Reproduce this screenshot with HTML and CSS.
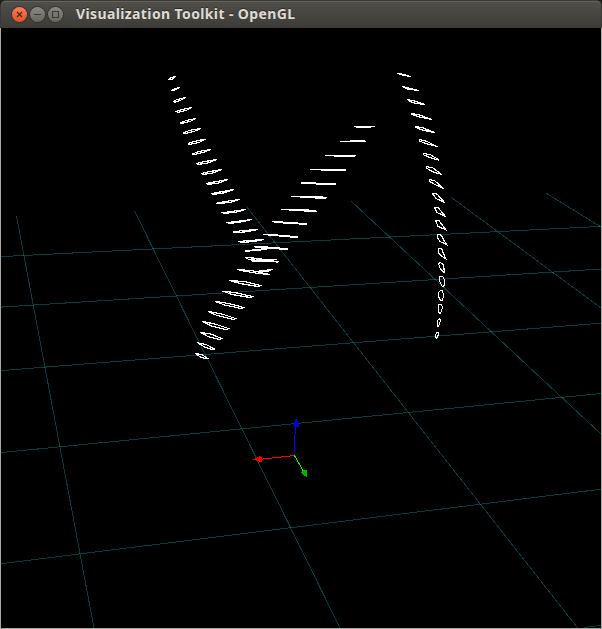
FILE: index.html
```html
<!DOCTYPE html>
<html lang="en">
<head>
<meta charset="utf-8">
<title>Visualization Toolkit - OpenGL</title>
<link rel="stylesheet" href="styles.css">
</head>
<body>
<main class="window">
  <header class="titlebar">
    <div class="controls">
      <button class="control close" aria-label="Close"><svg viewBox="0 0 15 15"><path d="M5 5l5 5M10 5l-5 5"/></svg></button>
      <button class="control" aria-label="Minimize"><svg viewBox="0 0 15 15"><path d="M4 7.5h7"/></svg></button>
      <button class="control" aria-label="Maximize"><svg viewBox="0 0 15 15"><path d="M4.5 4.5h6v6h-6z"/></svg></button>
    </div>
    <h1 class="title">Visualization Toolkit - OpenGL</h1>
  </header>
  <svg class="viewport" viewBox="1 28 600 600" shape-rendering="crispEdges">
    <g class="grid">
      <path d="M1 256.6L601 226.4"/>
      <path d="M1 307.1L601 269"/>
      <path d="M1 370.6L601 323.2"/>
      <path d="M1 452.6L601 393.5"/>
      <path d="M1 563.7L601 489.2"/>
      <path d="M584 627.6L601 625.3"/>
      <path d="M16.5 216L94 628"/>
      <path d="M134.5 211L340 628"/>
      <path d="M246.5 206.5L577.7 628"/>
      <path d="M351.3 201.3L601 434"/>
      <path d="M451.3 197.3L601 308"/>
      <path d="M546.3 193.3L601 227"/>
    </g>
    <g class="contours">
      <!-- left strand -->
      <g class="dense">
      <path d="M168.5 79.5L171 77.5L175.5 76.5L172 79.5Z"/>
      <path d="M171.5 90.5L174 89L179.5 87.5L175 90Z"/>
      <path d="M173.5 101.5L177 99.5L185.5 97.5L180 100.5L174.5 102.5Z"/>
      <path d="M176.5 111.5L182 109.5L191.5 107.5L186 110.5L178 112.5Z"/>
      <path d="M180.5 123L186 120.5L195.5 118.5L190 121.5L182 123.5Z"/>
      <path d="M183.5 133L189 130.5L200.5 128.5L194 131.5L185 133.5Z"/>
      <path d="M188.5 143.5L194 141.5L205.5 139L199 142.5L189 144.5Z"/>
      <path d="M192.5 154L199 151.5L210.5 149.5L203 152.5L194 154.5Z"/>
      <path d="M196.5 163.5L204 161.7L216.5 159.5L208 163L197.5 164.5Z"/>
      <path d="M201.5 173.5L209 171.7L221.5 169.5L213 173L202.5 174.5Z"/>
      <path d="M206.5 183.5L214 182L227.5 179.5L219 183L207.5 184.5Z"/>
      <path d="M211.5 193.5L220 192L233.5 189.5L225 192.7L212.5 194.5Z"/>
      <path d="M216.5 203.2L225 201.5L239.5 199.5L230 202.5L217.5 203.5Z"/>
      <path d="M222.5 212.7L231 211.5L245.5 209.5L236 212.2L224 213.5Z"/>
      <path d="M227.5 222.5L236 221.5L251.5 219.5L241 222L229 223.5Z"/>
      <path d="M233.5 232L243 230.5L257.5 229.5L248 231.7L236 232.5Z"/>
      <path d="M239.5 241.5L249 240.5L263.5 239.5L254 241.5L241 242.5Z"/>
      <path d="M245.5 251L256 249.5L270 248.5L260 250L247 251.2Z"/>
      <path d="M251.5 260.5L262 259.5L277 259.5L266 260.7L252.5 261.5Z"/>
      <path d="M257 271.5L263 270.5L272.5 269.5L267 271.5Z"/>
      </g>
      <!-- middle strand -->
      <path d="M354 126.5H375M356 127.5H371"/>
      <path d="M350 140.5H365M340 141.5H366"/>
      <path d="M325 155.5H356M334 156.5H355"/>
      <path d="M310 169.5H346M321 170.5H346"/>
      <path d="M301 182.5H316M301 183.5H336M316 184.5H336"/>
      <path d="M291 196.5H323M300 197.5H327M315 198.5H326"/>
      <path d="M281 209.5H309M289 210.5H316M304 211.5H317"/>
      <path d="M272 221.5H283M274 222.5H298M283 223.5H307M299 224.5H307"/>
      <path d="M263 234.5H278M268 235.5H290M279 236.5H298M290 237.5H298"/>
      <path d="M254 246.5H268M255 247.5H280M268 248.5H288M279 249.5H288"/>
      <g class="dense">
      <path d="M245.5 257.5L259 258.5L278.5 262L268 261.5L249 259.5Z"/>
      <path d="M237.5 269.5L252 270.7L269.5 274.5L258 273.5L241 270.5Z"/>
      <path d="M229.5 280.5L244 281.5L260.5 285.5L258 286.5L240 283.5Z"/>
      <path d="M222.5 291L237 293L252.5 296.5L250 297.5L232 294.5Z"/>
      <path d="M215.5 301.5L229 303.5L243.5 307.5L241 308.5L224 304.8Z"/>
      <path d="M208.5 311.5L222 314L235.5 318.5L233 319.5L217 315.5Z"/>
      <path d="M202.5 321.5L215 324L228.5 328.5L226 329.5L211 325.8Z"/>
      <path d="M200.5 332.5L211 334L221.5 338.5L219 339.5L208 336.5Z"/>
      <path d="M197.5 342.7L206 344.5L214.5 349L212 349.5L204 346.7Z"/>
      <path d="M195.5 353.5L202 354.5L207.5 358.5L206 359L200 356.7Z"/>
      <!-- right strand -->
      <path d="M397.5 73.5L403 74.2L410.5 76.5L402 75Z"/>
      <path d="M402.5 86.7L409 88L418.5 90.5L408 89.2Z"/>
      <path d="M407.5 99.7L415 101L424.5 104.5L413 102.8Z"/>
      <path d="M411.5 113.5L420 115L431.5 119.5L419 116.8L412 114.5Z"/>
      <path d="M415.5 126.5L422 127.5L434.5 132.5L422 130L416 127.5Z"/>
      <path d="M419.5 139.5L427 141.5L437.5 146.7L426 143.5L419.5 141Z"/>
      <path d="M423.5 153.5L430 154.5L439.5 160.2L431 158L423.5 154.8Z"/>
      <path d="M426.5 166.5L433 168L441.5 174.5L432 171.5L426.5 168Z"/>
      <path d="M429.5 179.5L435 181L443.5 188.5L435 184.5L429.5 181.5Z"/>
      <path d="M432.5 193.5L437 194L444.5 202.5L436 198.5Z"/>
      <path d="M434.5 207.5L438 207.5L445.5 216.5L437 212.5Z"/>
      <path d="M435.5 220.5L439 220.5L445.5 229.5L438 226.5Z"/>
      <path d="M437.5 234.5L441 235L446.5 244.5L440 241.5L437.5 238Z"/>
      <path d="M438.5 248.5H441.5L445.5 258.5L440.5 255.5L438.5 252.5Z"/>
      <path d="M438.5 263.5L440.5 262.5L443.5 265L444.5 272.5L440.5 269.5Z"/>
      </g>
      <path d="M439.5 276.5H442.5L444.5 279.5L444.5 285.5L442.5 286.5L439.5 281.5Z"/>
      <path d="M438.5 292.5L440.5 290.5H442.5L443.5 295.5L442.5 300.5H440.5L438.5 296.5Z"/>
      <path d="M438.5 304.5H441.5L442.5 307.5L440.5 313.5L438.5 312.5Z"/>
      <path d="M437.5 320.5L439.5 318.5L440.5 320.5L438.5 326.5L437.5 326.5Z"/>
      <path d="M435.5 335.5L436.5 332.5L438.5 332.5L438.5 334.5L436.5 338.5L435.5 337.5Z"/>
    </g>
    <g class="axis axis-x"><path d="M295 455.5L258 459.5"/><polygon points="253,459.5 260,456 262,457 262,461.5 260,462"/></g>
    <g class="axis axis-z"><path d="M294.5 455V443L295.5 426"/><polygon points="296,418 299.5,426 297,427.5 293,426"/></g>
    <g class="axis axis-y"><path d="M294.5 455.5L303 470.5"/><polygon points="301,472 304,470 307,470 307,477 304,476"/></g>
  </svg>
</main>
</body>
</html>
```
FILE: styles.css
```css
* { box-sizing: border-box; }
html, body { margin: 0; background: #22211e; }
.window {
  width: 602px;
  height: 629px;
  overflow: hidden;
  background: #000;
  display: grid;
  grid-template-rows: 28px 601px;
  border-radius: 5px 5px 0 0;
}
.titlebar {
  display: flex;
  align-items: center;
  gap: 13px;
  padding-left: 11px;
  background: linear-gradient(#504f4a, #3c3b37);
  border: solid #3a3935;
  border-width: 1px 1px 0;
  border-radius: 5px 5px 0 0;
  box-shadow: inset 0 1px #66645e;
}
.controls { display: flex; gap: 3px; }
.control {
  width: 15px;
  height: 15px;
  padding: 0;
  border: 0;
  border-radius: 50%;
  background: linear-gradient(#8a8981, #66655f);
  box-shadow: 0 0 0 1px #35342f;
}
.control svg { display: block; width: 15px; height: 15px; fill: none; stroke: #393833; stroke-width: 1.15; }
.close { background: linear-gradient(#f6805a, #e2501f); }
.close svg { stroke: #4d2316; }
.title {
  margin: 0 0 2px;
  color: #dfdbd2;
  font: bold 14px/20px "Noto Sans", "Open Sans", sans-serif;
  letter-spacing: .38px;
  white-space: nowrap;
  text-shadow: 0 -1px #2c2b28;
}
.viewport {
  display: block;
  width: 602px;
  height: 601px;
  border: solid #aca8a1;
  border-width: 0 1px 1px;
  background: #000;
}
.grid { fill: none; stroke: #00ffff; stroke-opacity: .25; stroke-width: 1; }
.contours { fill: none; stroke: #fff; stroke-width: 1; }
.dense { stroke-width: 1.2; }
.axis path { fill: none; stroke-width: 1; }
.axis-x path { stroke: #f00; }
.axis-x polygon { fill: #e60000; }
.axis-y path { stroke: #0f0; }
.axis-y polygon { fill: #00b400; }
.axis-z path { stroke: #00f; }
.axis-z polygon { fill: #0000e6; }
```
